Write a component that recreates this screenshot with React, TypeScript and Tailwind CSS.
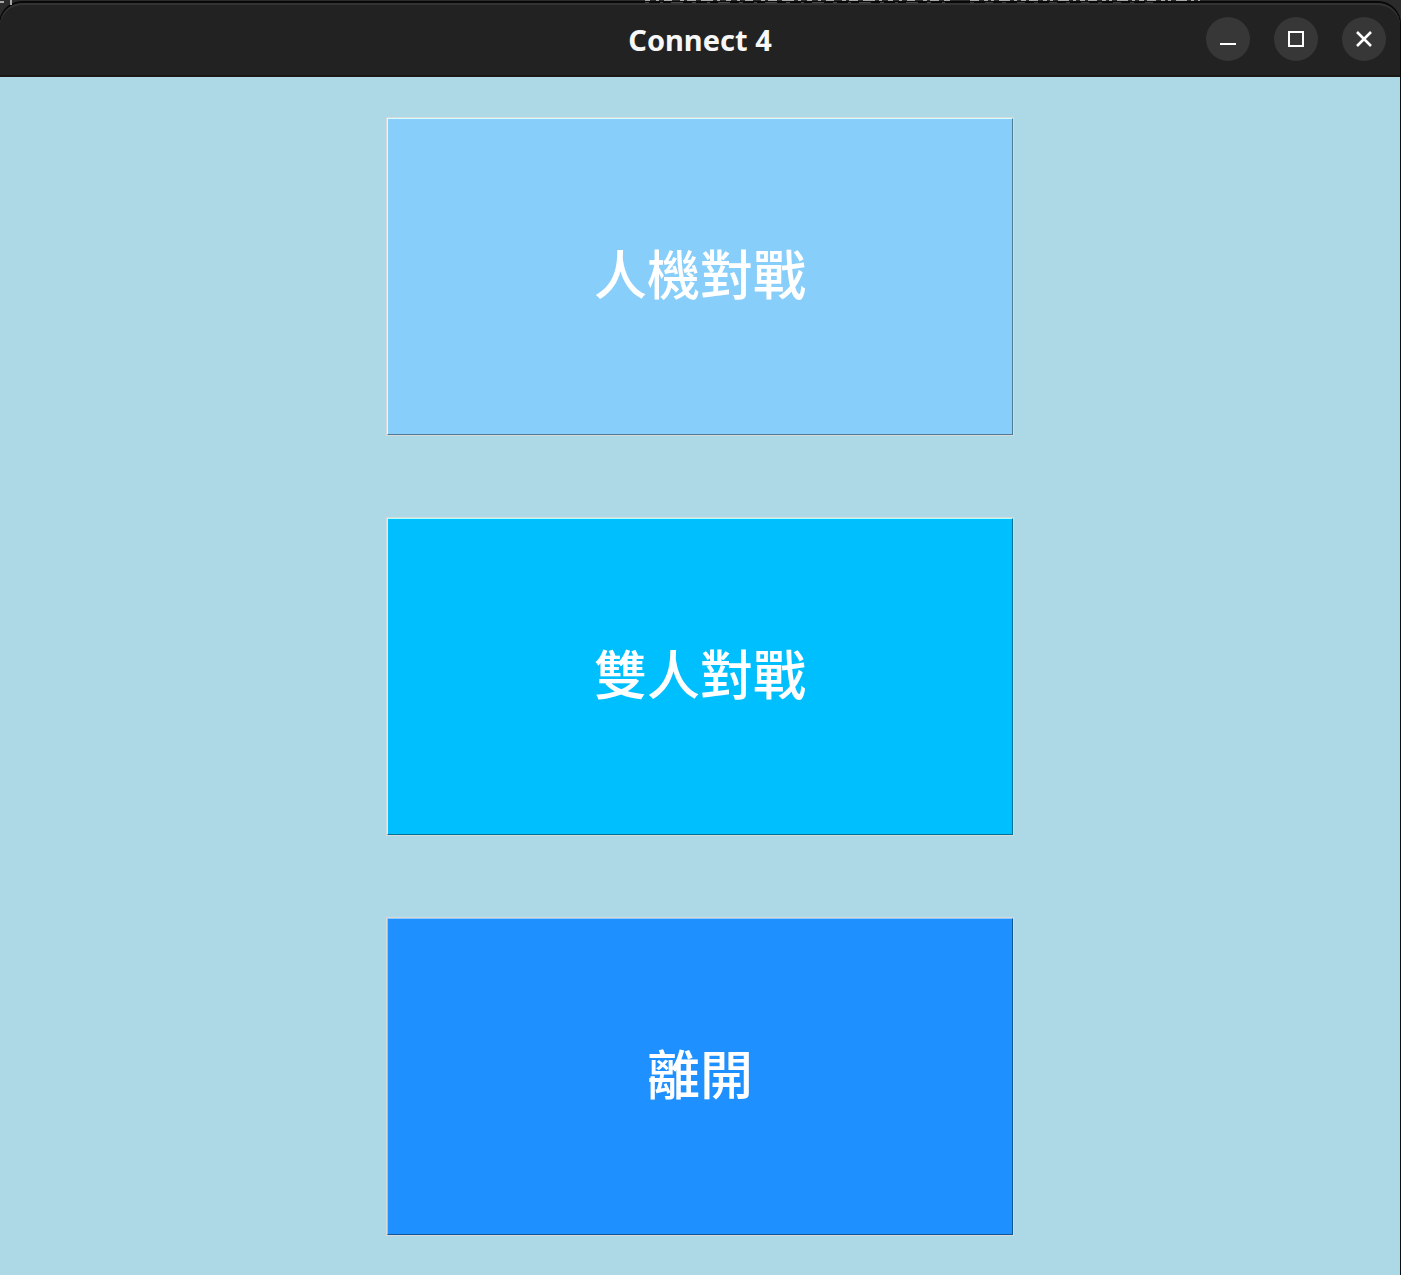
import type { ReactNode } from "react";

const items = [
  { label: "人機對戰", style: "bg-[#87cefa] border-t-[#d8ffff] border-l-[#d8ffff] border-b-[#507b96] border-r-[#507b96]" },
  { label: "雙人對戰", style: "bg-[#00bfff] border-t-[#b0ffff] border-l-[#b0ffff] border-b-[#007299] border-r-[#007299]" },
  { label: "離開", style: "bg-[#1e90ff] border-t-[#8ec7ff] border-l-[#8ec7ff] border-b-[#125699] border-r-[#125699]" },
];

function WindowButton({ label, children }: { label: string; children: ReactNode }) {
  return (
    <button aria-label={label} className="grid size-11 place-items-center rounded-full bg-[#373737]">
      <svg className="size-5" viewBox="0 0 20 20" fill="none" stroke="#fff" strokeWidth="2">
        {children}
      </svg>
    </button>
  );
}

export default function App() {
  return (
    <div className="flex min-h-screen flex-col bg-[#2b2b2b] font-['Noto_Sans','Noto_Sans_CJK_TC',sans-serif]">
      <header className="mt-[3px] mr-px grid h-[74px] grid-cols-[1fr_auto_1fr] items-center rounded-t-[22px] border-b-2 border-b-[#1b1815] bg-[#222] px-[14px] shadow-[0_-1px_0_1px_#080808,inset_0_2px_0_#333]">
        <h1 className="col-start-2 pt-0.5 text-[29px] leading-9 font-bold text-[#f7f7f7]">Connect 4</h1>
        <div className="flex justify-end gap-6">
          <WindowButton label="Minimize">
            <path d="M2 15h16" />
          </WindowButton>
          <WindowButton label="Maximize">
            <path d="M3 3h14v14H3z" />
          </WindowButton>
          <WindowButton label="Close">
            <path d="M3 3l14 14M17 3L3 17" strokeWidth="2.6" />
          </WindowButton>
        </div>
      </header>
      <main className="flex grow flex-col items-center gap-[81px] border-r border-r-[#101010] bg-[#add8e6] px-6 pt-10 pb-[39px]">
        {items.map(({ label, style }) => (
          <div key={label} className="flex w-full max-w-[628px] grow border border-[#d9d9d9]">
            <button className={`w-full border pb-1 text-[53px] leading-[76px] font-medium text-white ${style}`}>{label}</button>
          </div>
        ))}
      </main>
      <svg className="pointer-events-none absolute top-0 left-0 h-[6px] w-full" viewBox="0 0 1401 6" preserveAspectRatio="xMinYMin slice" aria-hidden="true">
        <path d="M0 2h4M11 0v5" stroke="#aaa" strokeWidth="2" />
        <path d="M645 .5H950" stroke="#a8aaa6" strokeDasharray="5 6 3 5 8 8 4 3 9 5 12 4 3 6" />
        <path d="M970 .5H1200" stroke="#a8aaa6" strokeDasharray="9 5 4 3 3 5 11 4 3 4 5 3" />
        <path d="M645 2.5H950" stroke="#444" strokeDasharray="4 11 3 8 12 9" />
        <path d="M970 2.5H1160" stroke="#383838" strokeDasharray="4 11 8 9" />
      </svg>
    </div>
  );
}
